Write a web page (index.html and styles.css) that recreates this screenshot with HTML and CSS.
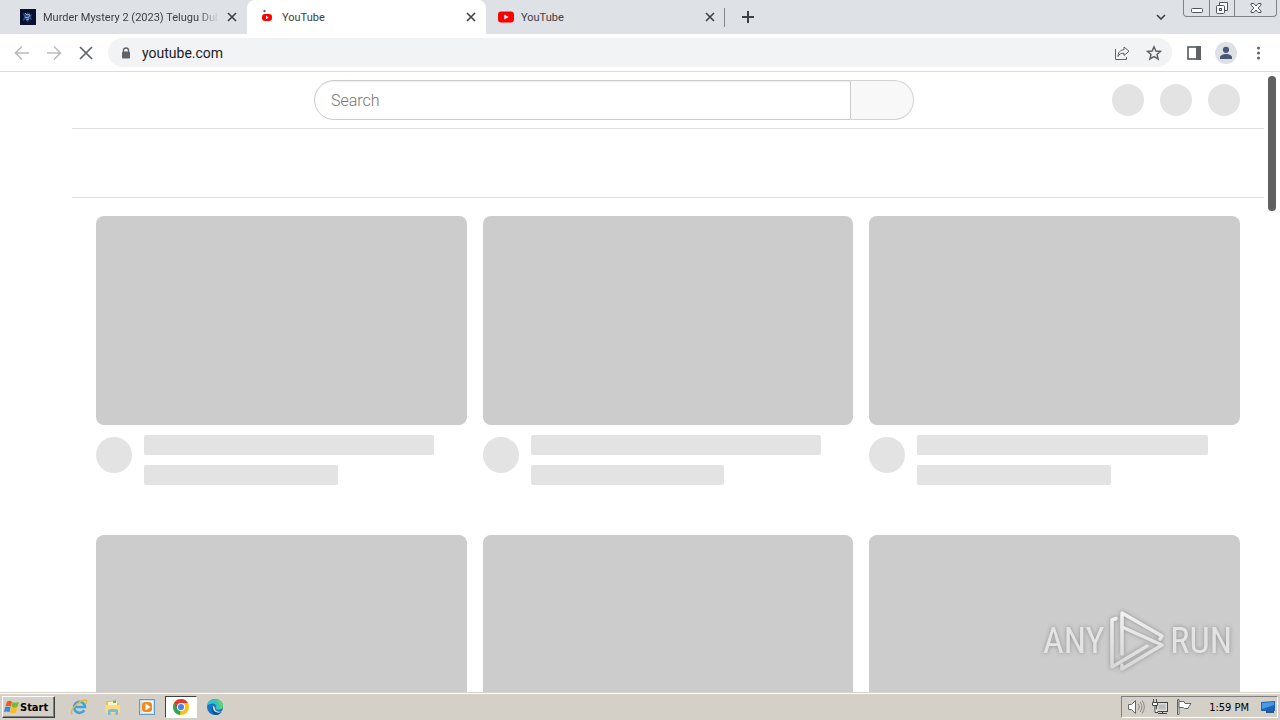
FILE: index.html
```html
<!DOCTYPE html>
<html lang="en">
<head>
    <meta charset="UTF-8">
    <meta name="viewport" content="width=device-width, initial-scale=1.0">
    <title>YouTube</title>
    <link rel="stylesheet" href="styles.css">
</head>
<body>
    <div class="tabstrip">
        <div class="tab">
            <svg class="favicon" viewBox="0 0 16 16"><rect width="16" height="16" fill="#0a1030"/><path d="M3 4l3 1 2-2 1 3 3-1-1 3 1 3-3-1-1 4-2-4-3 2 1-4z" fill="#2f4c84"/><path d="M5 4l2 2 3-1M5 8l3 1 2-3M6 11l3-1" stroke="#8fa8cf" fill="none"/></svg>
            <span class="tab-title fade">Murder Mystery 2 (2023) Telugu Dub</span>
            <button class="tab-close" aria-label="Close tab"><svg viewBox="0 0 10 10"><path d="M1 1l8 8M9 1l-8 8"/></svg></button>
        </div>
        <div class="tab active">
            <svg class="favicon" viewBox="0 0 16 16"><circle cx="5.500" cy="2" r="1.200" fill="#667"/><rect x="3" y="5" width="10" height="7" rx="3" fill="#f00"/><path d="M7 6.800v3.400l2.700-1.700z" fill="#fff"/></svg>
            <span class="tab-title">YouTube</span>
            <button class="tab-close" aria-label="Close tab"><svg viewBox="0 0 10 10"><path d="M1 1l8 8M9 1l-8 8"/></svg></button>
        </div>
        <div class="tab last">
            <svg class="favicon" viewBox="0 0 16 16"><rect y="2.500" width="16" height="11" rx="3" fill="#f00"/><path d="M6.300 5.600v4.800l4.200-2.400z" fill="#fff"/></svg>
            <span class="tab-title">YouTube</span>
            <button class="tab-close" aria-label="Close tab"><svg viewBox="0 0 10 10"><path d="M1 1l8 8M9 1l-8 8"/></svg></button>
        </div>
        <button class="new-tab" aria-label="New tab"><svg viewBox="0 0 12 12"><path d="M6 0v12M0 6h12"/></svg></button>
        <button class="tab-search" aria-label="Search tabs"><svg viewBox="0 0 10 6"><path d="M1 1l4 4 4-4"/></svg></button>
        <div class="window-buttons">
            <button aria-label="Minimize"><svg width="12" height="16" viewBox="0 0 12 16"><rect x=".5" y="8.500" width="11" height="4" rx="1"/></svg></button>
            <button aria-label="Restore"><svg width="14" height="16" viewBox="0 0 14 16"><path d="M4.500 5V2.500h8v8H10"/><rect x="1.500" y="5.500" width="8" height="8" rx="1"/><rect x="4.500" y="8.500" width="2" height="2"/></svg></button>
            <button class="wide" aria-label="Close"><svg width="12" height="16" viewBox="0 0 12 16"><path d="M1 3.500h3l2 2.500 2-2.500h3v1.500L8.200 8l2.800 3v1.500H8L6 10l-2 2.500H1V11l2.800-3L1 5z"/></svg></button>
        </div>
    </div>

    <div class="toolbar">
        <button class="tool dim" aria-label="Back"><svg viewBox="0 0 16 16"><path d="M15 8H2M8 1.500L1.500 8 8 14.500"/></svg></button>
        <button class="tool dim" aria-label="Forward"><svg viewBox="0 0 16 16"><path d="M1 8h13M8 1.500L14.500 8 8 14.500"/></svg></button>
        <button class="tool" aria-label="Stop"><svg viewBox="0 0 16 16"><path d="M2 2l12 12M14 2L2 14"/></svg></button>
        <div class="omnibox">
            <svg class="lock" viewBox="0 0 10 12"><path d="M2.500 5V3.500a2.500 2.500 0 0 1 5 0V5" fill="none" stroke="#5f6368" stroke-width="1.300"/><rect x="1" y="4.500" width="8" height="7" rx="1" fill="#5f6368"/></svg>
            <input class="address" type="text" value="youtube.com" aria-label="Address">
            <button class="tool" aria-label="Share"><svg viewBox="0 0 16 16"><path class="thin" d="M1.500 4v10.500h11V12M10 2L15 6.200 10 10.500V8.200C7 8 5 9.200 4 11.500 4 7.500 6 5 10 4.800z"/></svg></button>
            <button class="tool" aria-label="Bookmark"><svg viewBox="0 0 16 16"><path class="star" d="M8 1.800l1.900 4.200 4.600.4-3.500 3 1.100 4.500L8 11.500l-4.100 2.400L5 9.400l-3.500-3L6.100 6z"/></svg></button>
        </div>
        <button class="tool side" aria-label="Side panel"><svg viewBox="0 0 16 16"><rect x="2" y="2" width="12" height="12"/><path d="M10 1h5v14h-5z" fill="#5f6368" stroke="none"/></svg></button>
        <button class="tool profile" aria-label="Profile"><svg viewBox="0 0 22 22"><circle cx="11" cy="11" r="11" fill="#dde1e6"/><circle cx="11" cy="7.800" r="3.100" fill="#4b5874"/><path d="M5 17v-1.500c0-2.300 3-3.500 6-3.500s6 1.200 6 3.500V17z" fill="#4b5874"/></svg></button>
        <button class="tool" aria-label="Menu"><svg viewBox="0 0 16 16"><g fill="#5f6368" stroke="none"><circle cx="8.500" cy="3" r="1.500"/><circle cx="8.500" cy="8" r="1.500"/><circle cx="8.500" cy="13" r="1.500"/></g></svg></button>
    </div>

    <div class="viewport">
        <div class="page">
            <header class="masthead">
                <div class="masthead-start"></div>
                <form class="search">
                    <input type="text" placeholder="Search" aria-label="Search">
                    <button type="button" aria-label="Search"></button>
                </form>
                <div class="masthead-end">
                    <span class="circle"></span>
                    <span class="circle"></span>
                    <span class="circle"></span>
                </div>
            </header>
            <div class="chips"></div>
            <main class="grid">
                <div class="video"><div class="thumb"></div><div class="details"><span class="avatar"></span><div class="lines"><span class="line"></span><span class="line short"></span></div></div></div>
                <div class="video"><div class="thumb"></div><div class="details"><span class="avatar"></span><div class="lines"><span class="line"></span><span class="line short"></span></div></div></div>
                <div class="video"><div class="thumb"></div><div class="details"><span class="avatar"></span><div class="lines"><span class="line"></span><span class="line short"></span></div></div></div>
                <div class="video"><div class="thumb"></div></div>
                <div class="video"><div class="thumb"></div></div>
                <div class="video"><div class="thumb"></div></div>
            </main>
        </div>
        <div class="scrollbar"><div class="scroll-thumb"></div></div>
        <div class="watermark">
            <span>ANY</span>
            <svg viewBox="0 0 56 62">
                <defs><linearGradient id="fade" gradientUnits="userSpaceOnUse" x1="0" y1="0" x2="0" y2="62"><stop offset="0" stop-color="#f2f2f2"/><stop offset="1" stop-color="#d6d6d6"/></linearGradient></defs>
                <g fill="none" stroke="url(#fade)" stroke-width="3.500" stroke-linejoin="round" stroke-linecap="round">
                    <path d="M7 8.500L3 10v47l35-21"/>
                    <path d="M13 44V3l40 23-2 3"/>
                    <path d="M13 17l40 18-40 24v-4"/>
                </g>
            </svg>
            <span>RUN</span>
        </div>
    </div>

    <div class="taskbar">
        <button class="start">
            <svg viewBox="0 0 16 16"><path d="M3 2.500c2-1 3.500-.8 5 .2L7 7.500c-2-1-3.500-1-5.500-.2z" fill="#ee5a24"/><path d="M8.500 3c2 1 4 1 6.500 0l-1.500 5C11.500 9 9.500 8.800 7.500 7.800z" fill="#7fb735"/><path d="M1.200 8c2-.8 3.500-.8 5.500.2l-1.300 5c-1.800-1-3.500-1-5.400-.2z" fill="#3b8ad9"/><path d="M7.300 8.500c2 1 4 1 6 .2l-1.400 5c-2 .8-4 .8-5.900-.2z" fill="#f9bd1c"/></svg>
            Start
        </button>
        <button class="task first" aria-label="Internet Explorer"><svg viewBox="0 0 18 18"><path d="M14.200 12.200a5.500 5.500 0 1 1 .8-3.200H5" fill="none" stroke="#3ba5e0" stroke-width="2.600"/><path d="M2 16.500C-1 13 8 3 15 2c2.500-.2 2 2 1 3.500" fill="none" stroke="#e7b83c" stroke-width="1.400"/></svg></button>
        <button class="task" aria-label="Explorer"><svg viewBox="0 0 18 18"><path d="M2 3h5l1 2h7v9H2z" fill="#e7bd59"/><path d="M4 4h9v5H4z" fill="#fff4c9"/><path d="M1 7h15v8H1z" fill="#f5dc8a"/><path d="M4 17v-5c0-1.500 10-1.500 10 0v5h-2.500v-3h-5v3z" fill="#7bbbd8"/><path d="M9 2.500h3V5H9z" fill="#77b255"/></svg></button>
        <button class="task" aria-label="Media Player"><svg viewBox="0 0 18 18"><rect x="1.500" y="1.500" width="15" height="15" fill="#c5e0f4" stroke="#5e9dcd"/><rect x="4" y="3" width="11" height="12" fill="#f4f8fb"/><rect x="4" y="4" width="10" height="10" rx="3" fill="#f18a1b"/><path d="M7.500 5.500v7L12.500 9z" fill="#fff"/></svg></button>
        <button class="task pressed" aria-label="Chrome"><svg viewBox="0 0 18 18"><circle cx="9" cy="9" r="8" fill="#fbc116"/><path d="M9 9l-1 8A8 8 0 0 1 2.070 5z" fill="#2da94f"/><path d="M9 5h6.930A8 8 0 0 0 2.070 5l3.500 6z" fill="#e33b2e"/><circle cx="9" cy="9" r="4" fill="#fff"/><circle cx="9" cy="9" r="3.100" fill="#4285f4"/></svg></button>
        <button class="task" aria-label="Edge"><svg viewBox="0 0 18 18"><circle cx="9" cy="9" r="8" fill="#1475c9"/><path d="M1.100 8C1.500 4 5 1 9 1c4.500 0 8 3 8 6.500 0 3-2.500 4-5 4-2 0-2.800-.8-2-1.800C11 8 9.500 5.500 6.500 5.500 4 5.500 2 6.500 1.100 8z" fill="#36c4c0"/><path d="M9 1c4.500 0 8 3 8 6.500 0 3-2.500 4-5 4 3-3 1-8-3-10.500z" fill="#5ed26c"/><path d="M7 8c-2 3 0 7 4 7.500 2 .2 3.500-.5 5-2-2 .5-5 .3-6.500-1.500C8.500 11 9 9.500 9 9z" fill="#d4d0c8"/><path d="M7 8c-3 3-1 8 3 9 2.500-.2 4.500-1.500 5.800-3.300C12 16 6 14 7 8z" fill="#0d4f9a"/></svg></button>
        <div class="tray">
            <svg viewBox="0 0 18 18"><path d="M1.500 6.500h3l4-4v13l-4-4h-3z" fill="#fff" stroke="#666"/><path d="M11 6c1.500 2 1.500 4 0 6M13 4c2.500 3 2.500 7 0 10M15 2.500c3 4 3 9 0 13" fill="none" stroke="#888"/></svg>
            <svg viewBox="0 0 18 18"><rect x="5.500" y="4.500" width="11" height="9" fill="#ddd" stroke="#444"/><rect x="7.500" y="6.500" width="7" height="5" fill="#bbb"/><path d="M7 15.500h9M11.500 13v2" stroke="#444"/><path d="M2.500 1v3M5.500 1v3M1.500 4.500h5v3h-5zM4 8v6.500h3" fill="#fff" stroke="#444"/></svg>
            <svg viewBox="0 0 18 18"><path d="M2.500 1.500h1.500v15H2.500z" fill="#fff" stroke="#666"/><path d="M4 3.500h5l1 2h6l-2 3-1 2H9.500l-1-1H4z" fill="#fff" stroke="#666"/></svg>
            <span class="clock">1:59 PM</span>
            <svg viewBox="0 0 18 18"><path d="M2 4l14-1v10H2z" fill="#1c63b7"/><path d="M3 5l12-1v3L3 11z" fill="#4b9ae4"/><path d="M7 13h8v2H7z" fill="#33557c"/></svg>
        </div>
    </div>
</body>
</html>
```
FILE: styles.css
```css
* {
    box-sizing: border-box;
}
body {
    margin: 0;
    height: 100vh;
    display: flex;
    flex-direction: column;
    overflow: hidden;
    background: #fff;
    font-family: Roboto, "Liberation Sans", sans-serif;
    font-size: 11px;
    color: #3c4043;
}
button {
    border: 0;
    padding: 0;
    background: none;
    font: inherit;
    color: inherit;
}
svg {
    display: block;
    flex: none;
}

/* tabs */
.tabstrip {
    display: flex;
    align-items: center;
    flex: none;
    height: 34px;
    padding-left: 8px;
    background: #dee1e6;
}
.tab {
    display: flex;
    align-items: center;
    flex: 0 1 239px;
    min-width: 0;
    height: 34px;
    padding: 0 10px 0 12px;
}
.tab.active {
    background: #fff;
    border-radius: 8px 8px 0 0;
}
.tab.last {
    position: relative;
}
.tab.last::after {
    content: "";
    position: absolute;
    right: 0;
    top: 8px;
    width: 1px;
    height: 19px;
    background: #80868b;
}
.favicon {
    width: 16px;
    height: 16px;
    margin-right: 7px;
}
.tab-title {
    flex: 1;
    overflow: hidden;
    white-space: nowrap;
}
.fade {
    -webkit-mask-image: linear-gradient(to right, #000 88%, transparent);
    mask-image: linear-gradient(to right, #000 88%, transparent);
}
.tab-close {
    margin-left: 8px;
}
.tab-close svg {
    width: 10px;
    height: 10px;
    stroke: #3c4043;
    stroke-width: 1.6;
}
.new-tab {
    margin-left: 17px;
}
.new-tab svg {
    width: 12px;
    height: 12px;
    stroke: #3c4043;
    stroke-width: 2;
}
.tab-search {
    margin-left: auto;
    margin-right: 17px;
}
.tab-search svg {
    width: 10px;
    height: 6px;
    fill: none;
    stroke: #3c4043;
    stroke-width: 1.6;
}
.window-buttons {
    display: flex;
    align-self: flex-start;
    height: 17px;
    margin-right: 3px;
    border: 1px solid #80848a;
    border-top: 0;
    border-radius: 0 0 4px 4px;
}
.window-buttons button {
    display: flex;
    justify-content: center;
    width: 25px;
}
.window-buttons button + button {
    border-left: 1px solid #80848a;
}
.window-buttons .wide {
    width: 42px;
}
.window-buttons svg {
    fill: #fff;
    stroke: #50545c;
}

/* toolbar */
.toolbar {
    display: flex;
    align-items: center;
    flex: none;
    height: 38px;
    padding: 0 6px;
    border-bottom: 1px solid #dadce0;
}
.tool {
    display: flex;
    justify-content: center;
    width: 32px;
}
.tool svg {
    width: 16px;
    height: 16px;
    fill: none;
    stroke: #5f6368;
    stroke-width: 1.7;
}
.tool.dim svg {
    stroke: #babcbe;
}
.tool .thin {
    stroke-width: 1;
}
.tool .star {
    stroke-width: 1.5;
}
.tool.profile svg {
    width: 22px;
    height: 22px;
    stroke: none;
}
.omnibox {
    display: flex;
    align-items: center;
    flex: 1;
    height: 29px;
    margin: 0 6px;
    padding: 0 2px 0 13px;
    border-radius: 15px;
    background: #f1f3f4;
}
.lock {
    width: 10px;
    height: 12px;
}
.address {
    flex: 1;
    min-width: 0;
    padding: 0;
    margin-left: 11px;
    border: 0;
    outline: 0;
    background: none;
    font-family: Roboto, sans-serif;
    font-size: 14px;
    color: #202124;
}

/* page */
.viewport {
    position: relative;
    display: flex;
    flex: 1;
    min-height: 0;
    overflow: hidden;
}
.page {
    flex: 1;
}
.masthead {
    display: flex;
    align-items: center;
    justify-content: space-between;
    height: 56px;
    padding: 0 24px 0 16px;
}
.masthead-start {
    width: 100px;
}
.masthead-end {
    display: flex;
    gap: 16px;
}
.circle {
    width: 32px;
    height: 32px;
    border-radius: 50%;
    background: #e3e3e3;
}
.search {
    display: flex;
    flex: 0 1 600px;
    height: 40px;
}
.search input {
    flex: 1;
    min-width: 0;
    padding: 0 16px;
    border: 1px solid #ccc;
    border-radius: 20px 0 0 20px;
    box-shadow: inset 0 1px 1px #eee;
    font-family: Roboto, sans-serif;
    font-size: 16px;
    font-weight: 300;
}
.search input::placeholder {
    color: #757575;
}
.search button {
    width: 63px;
    border: 1px solid #d3d3d3;
    border-left: 0;
    border-radius: 0 20px 20px 0;
    background: #f8f8f8;
}
.chips {
    height: 70px;
    margin-left: 72px;
    border: solid #e0e0e0;
    border-width: 1px 0;
}
.grid {
    display: grid;
    grid-template-columns: repeat(3, 1fr);
    gap: 50px 16px;
    margin-left: 72px;
    padding: 18px 24px;
}
.thumb {
    aspect-ratio: 370 / 209;
    border-radius: 8px;
    background: #ccc;
}
.details {
    display: flex;
    gap: 12px;
    margin-top: 10px;
}
.avatar {
    flex: none;
    width: 36px;
    height: 36px;
    margin-top: 2px;
    border-radius: 50%;
    background: #e3e3e3;
}
.lines {
    display: flex;
    flex: 1;
    flex-direction: column;
    gap: 10px;
}
.line {
    width: 90%;
    height: 20px;
    border-radius: 2px;
    background: #e3e3e3;
}
.line.short {
    width: 60%;
}
.scrollbar {
    flex: none;
    width: 16px;
    padding: 4px;
}
.scroll-thumb {
    height: 135px;
    border-radius: 4px;
    background: #606060;
}
.watermark {
    position: absolute;
    right: 48px;
    bottom: 20px;
    display: flex;
    align-items: center;
    gap: 5px;
    font-family: "Roboto Condensed", "Liberation Sans Narrow", Roboto, sans-serif;
    font-size: 36px;
    font-weight: 400;
    color: #e4e4e4;
    filter: drop-shadow(0 0 2px rgba(0, 0, 0, 0.3));
}
.watermark svg {
    width: 56px;
    height: 62px;
}

/* taskbar */
.taskbar {
    display: flex;
    align-items: center;
    flex: none;
    height: 28px;
    padding: 3px 2px 2px;
    border-top: 1px solid #d4d0c8;
    box-shadow: inset 0 1px #fff;
    background: #d4d0c8;
    font-family: "DejaVu Sans Condensed", "DejaVu Sans", sans-serif;
    color: #000;
}
.start {
    display: flex;
    align-items: center;
    width: 53px;
    height: 22px;
    padding-left: 1px;
    border: 1px solid;
    border-color: #fff #404040 #404040 #fff;
    box-shadow: inset -1px -1px #808080;
    font-weight: bold;
}
.start svg {
    width: 16px;
    height: 16px;
}
.task {
    display: flex;
    align-items: center;
    justify-content: center;
    width: 32px;
    height: 22px;
    margin-right: 2px;
}
.task.first {
    margin-left: 8px;
}
.task svg {
    width: 18px;
    height: 18px;
}
.task.pressed {
    border: 1px solid;
    border-color: #404040 #fff #fff #404040;
    background: #fff;
}
.tray {
    display: flex;
    align-items: center;
    gap: 6px;
    height: 22px;
    margin-left: auto;
    padding: 0 0 0 5px;
    border: 1px solid;
    border-color: #808080 #fff #fff #808080;
}
.tray svg {
    width: 18px;
    height: 18px;
}
.clock {
    margin: 0 4px 0 10px;
}
```
